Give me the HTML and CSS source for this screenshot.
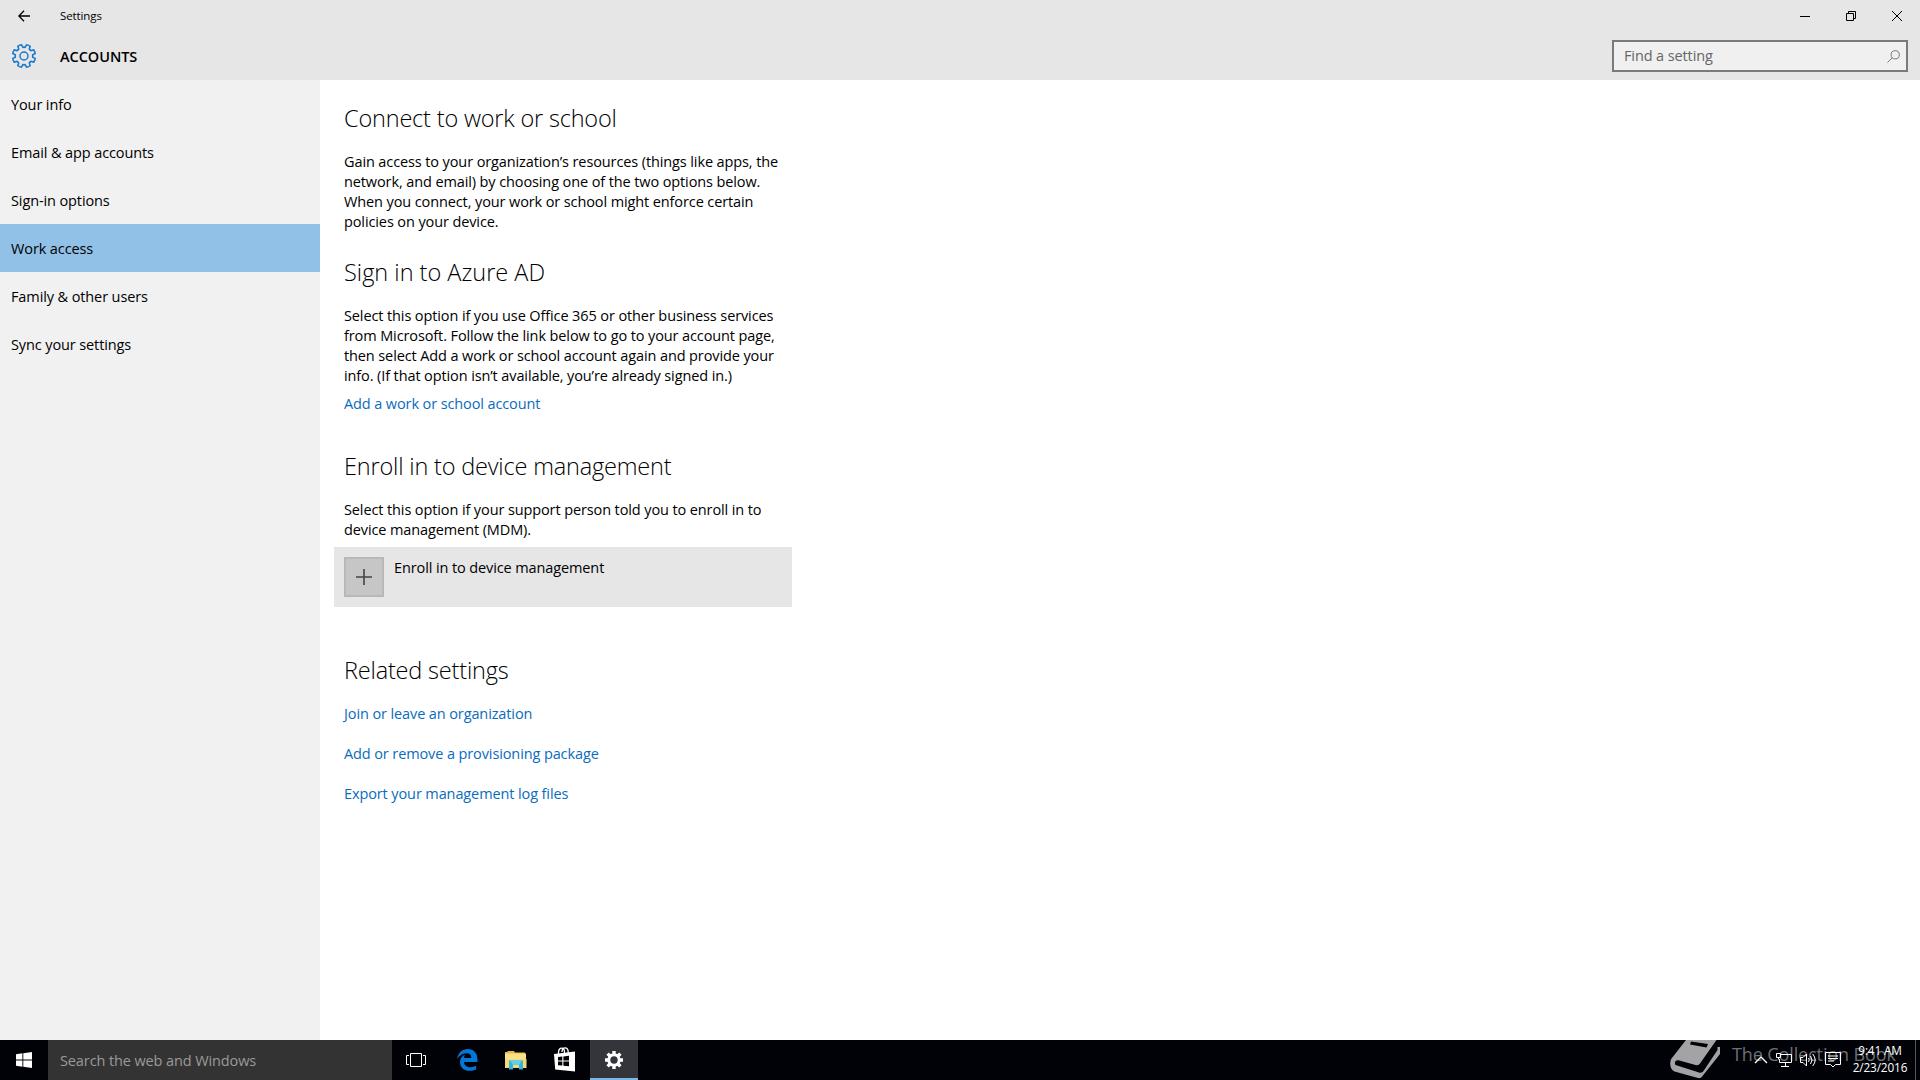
FILE: index.html
```html
<!DOCTYPE html>
<html lang="en">
<head>
    <meta charset="UTF-8">
    <meta name="viewport" content="width=device-width, initial-scale=1.0">
    <title>Settings</title>
    <link rel="stylesheet" href="styles.css">
</head>
<body>
    <div class="window">
        <div class="titlebar">
            <button class="back">
                <svg width="12" height="12" viewBox="0 0 12 12"><path d="M12 6H1M6 .8L.8 6L6 11.2"/></svg>
            </button>
            <span class="title">Settings</span>
            <div class="controls">
                <button><svg width="10" height="10" viewBox="0 0 10 10"><path d="M0 5.5H10"/></svg></button>
                <button><svg width="10" height="10" viewBox="0 0 10 10"><path d="M.5 2.5H7.5V9.5H.5ZM2.5 2.5V.5H9.5V7.5H7.5"/></svg></button>
                <button><svg width="10" height="10" viewBox="0 0 10 10"><path d="M0 0L10 10M10 0L0 10"/></svg></button>
            </div>
        </div>
        <div class="header">
            <svg class="gear" width="26" height="26" viewBox="-13 -13 26 26">
                <defs><path id="tooth" d="M0 -8.7L1.2 -8.6L2.4 -11.25Q4.5 -10.9 6.26 -9.64L5.24 -6.95L6.15 -6.15"/></defs>
                <use href="#tooth"/>
                <use href="#tooth" transform="rotate(45)"/>
                <use href="#tooth" transform="rotate(90)"/>
                <use href="#tooth" transform="rotate(135)"/>
                <use href="#tooth" transform="rotate(180)"/>
                <use href="#tooth" transform="rotate(225)"/>
                <use href="#tooth" transform="rotate(270)"/>
                <use href="#tooth" transform="rotate(315)"/>
                <circle r="4"/>
            </svg>
            <h1>ACCOUNTS</h1>
            <div class="find">
                <span>Find a setting</span>
                <svg width="13" height="13" viewBox="0 0 13 13"><circle cx="8.2" cy="4.8" r="4.1"/><path d="M5.2 7.8L.5 12.5"/></svg>
            </div>
        </div>
        <div class="content">
            <ul class="nav">
                <li>Your info</li>
                <li>Email &amp; app accounts</li>
                <li>Sign-in options</li>
                <li class="active">Work access</li>
                <li>Family &amp; other users</li>
                <li>Sync your settings</li>
            </ul>
            <div class="main">
                <h2 class="h-connect">Connect to work or school</h2>
                <p>Gain access to your organization’s resources (things like apps, the<br>
                network, and email) by choosing one of the two options below.<br>
                When you connect, your work or school might enforce certain<br>
                policies on your device.</p>

                <h2 class="h-azure">Sign in to Azure AD</h2>
                <p>Select this option if you use Office 365 or other business services<br>
                from Microsoft. Follow the link below to go to your account page,<br>
                then select Add a work or school account again and provide your<br>
                info. (If that option isn’t available, you’re already signed in.)</p>
                <a class="add-account">Add a work or school account</a>

                <h2 class="h-enroll">Enroll in to device management</h2>
                <p>Select this option if your support person told you to enroll in to<br>
                device management (MDM).</p>
                <div class="enroll">
                    <div class="plus"><svg width="16" height="16" viewBox="0 0 16 16"><path d="M8 0V16M0 8H16"/></svg></div>
                    <span>Enroll in to device management</span>
                </div>

                <h2 class="h-related">Related settings</h2>
                <div class="links">
                    <a>Join or leave an organization</a>
                    <a>Add or remove a provisioning package</a>
                    <a>Export your management log files</a>
                </div>
            </div>
        </div>
    </div>

    <div class="taskbar">
        <div class="task start">
            <svg width="16" height="16" viewBox="0 0 16 16"><path fill="#fff" d="M0 2.2L6.4 1.3V7.5H0ZM7.3 1.2L16 0V7.5H7.3ZM0 8.4H6.4V14.7L0 13.8ZM7.3 8.4H16V16L7.3 14.8Z"/></svg>
        </div>
        <div class="search">Search the web and Windows</div>
        <div class="task">
            <svg width="20" height="14" viewBox="0 0 20 14"><path fill="none" stroke="#fff" d="M4.5 .5H15.5V13.5H4.5ZM3 2.5H.5V11.5H3M17 2.5H19.5V11.5H17"/></svg>
        </div>
        <div class="apps">
            <div class="task">
                <svg width="21" height="22" viewBox="0 0 21 22"><path fill="#0078d7" d="M0 10C1 4 5 0 10.8 0C17 0 20.5 4.5 20.5 10.5V13H7C7.2 17 11 18.4 14 18.2C16 18.1 17.8 17.5 19.2 16.7V20.3C17.5 21.3 15 21.8 12.5 21.8C7 21.8 3 18.5 3 13C3 9.5 5 7 8 5.8C7.5 6.8 7.1 7.8 7 9H14.3C14.3 6 12.8 4.3 9.8 4.3C6 4.3 2.3 6.3 0 10Z"/></svg>
            </div>
            <div class="task">
                <svg width="22" height="19" viewBox="0 0 22 19">
                    <path fill="#e9b93c" d="M0 1H2L3 0H9L10 1.5H20V3H0Z"/>
                    <path fill="#fbe08a" d="M0 2.5H21V17H0Z"/>
                    <path fill="#f6d878" d="M0 17V8H21.5V17Z"/>
                    <path fill="#2fb4dd" d="M4 18.5V9.5H18V18.5H14V14H8V18.5Z"/>
                    <path fill="#5cd0ee" d="M5 9.5H17L14 14H8Z"/>
                </svg>
            </div>
            <div class="task">
                <svg class="store" width="22" height="25" viewBox="0 0 22 25">
                    <path fill="none" stroke="#fff" stroke-width="1.3" d="M4.5 7V5.5C4.5 2.5 6 1.2 7.6 1.2C9.3 1.2 10.5 2.5 10.5 5.5V6M8 5C8 2 9.5 .8 11 .8C13 .8 14.2 2.2 14.2 5V6"/>
                    <path fill="#fff" d="M0 7L21 4.5V24.5L1.2 22.5Z"/>
                    <path fill="#000208" d="M4 10L8.3 9.5V13.4H4ZM9.4 9.4L15 8.7V13.4H9.4ZM4 14.4H8.3V18.6L4 18.2ZM9.4 14.4H15V19.3L9.4 18.7Z"/>
                </svg>
            </div>
            <div class="task current">
                <svg width="20" height="20" viewBox="-10 -10 20 20">
                    <circle r="5.2" fill="none" stroke="#fff" stroke-width="3"/>
                    <path stroke="#fff" stroke-width="3.4" d="M0 -9V-5M0 9V5M-9 0H-5M9 0H5M-6.4 -6.4L-4 -4M6.4 6.4L4 4M-6.4 6.4L-4 4M6.4 -6.4L4 -4"/>
                </svg>
            </div>
        </div>
        <div class="watermark">
            <svg width="52" height="40" viewBox="0 0 52 40">
                <path fill="#a3a3a5" fill-rule="evenodd" d="M16 0H46.5L30 23.5C29 25 27.5 25.5 25.5 25L8.5 20.3C5.5 19.6 4 22.5 5.5 25L29 32.5C31 33 32.5 32.5 33.5 31L47.5 10V7H50V14L32.5 36C31.3 37.8 30 38.5 28 38L4.5 31.5C1 30 -.5 25.5 .5 21C1 19 2 17.5 3.5 16ZM21 1.5L20 4.5L36.5 7.5L38 4Z"/>
            </svg>
            <span>The Collection Book</span>
        </div>
        <div class="tray">
            <svg width="14" height="8" viewBox="0 0 14 8"><path stroke-width="1.4" d="M1 7L7 1L13 7"/></svg>
            <svg width="16" height="14" viewBox="0 0 16 14"><path d="M5 1.5H15.5V9.5H3.5V6M.5 .5H4.5V4.5H.5ZM2.5 4.5V6.5M9.5 9.5V13M5 13.5H13"/></svg>
            <svg width="17" height="14" viewBox="0 0 17 14"><path d="M.5 4.5H3L6.5 1V13L3 9.5H.5ZM8.5 5Q10 7 8.5 9M10.5 3Q13.5 7 10.5 11M12.7 1Q17.7 7 12.7 13"/></svg>
            <svg width="16" height="16" viewBox="0 0 16 16"><path d="M.5 .5H15.5V12.5H10.5L8 15L5.5 12.5H.5ZM3 4H13M3 6.5H13M3 9H9"/></svg>
            <div class="clock"><span>9:41 AM</span><span class="date">2/23/2016</span></div>
            <div class="desktop"></div>
        </div>
    </div>
</body>
</html>
```
FILE: styles.css
```css
*{box-sizing: border-box;}
body{
    margin: 0;
    width: 1920px;
    height: 1080px;
    overflow: hidden;
    background: #fff;
    color: #000;
    font-family: "Open Sans", "Noto Sans", sans-serif;
    font-size: 14.5px;
    line-height: 20px;
    letter-spacing: -0.11px;
    white-space: nowrap;
}
button{
    padding: 0;
    border: 0;
    background: none;
}
svg{
    display: block;
    flex: none;
}
.window{
    height: 1040px;
}
.titlebar{
    display: flex;
    align-items: center;
    height: 32px;
    background: #e6e6e6;
}
.titlebar svg{
    margin: 0 auto;
    fill: none;
    stroke: #000;
}
.back{
    width: 48px;
}
.back svg{
    stroke-width: 1.3;
}
.title{
    margin-left: 12px;
    font-size: 11.5px;
    letter-spacing: -0.1px;
}
.controls{
    display: flex;
    margin-left: auto;
}
.controls button{
    width: 46px;
}
.header{
    display: flex;
    align-items: center;
    height: 48px;
    padding: 0 12px 0 11px;
    background: #e6e6e6;
}
.gear{
    fill: none;
    stroke: #1b7ac9;
    stroke-width: 1.5;
    stroke-linejoin: round;
    stroke-linecap: round;
}
.header h1{
    margin: 0 0 0 23px;
    padding-top: 2px;
    font-size: 14.5px;
    font-weight: 600;
    letter-spacing: -0.05px;
}
.find{
    display: flex;
    align-items: center;
    justify-content: space-between;
    width: 296px;
    height: 32px;
    margin-left: auto;
    padding: 0 6px 0 10px;
    border: 2px solid #7a7a7a;
    background: #f0f0f0;
    color: #666;
}
.find svg{
    fill: none;
    stroke: #7a7a7a;
}
.content{
    display: flex;
    height: 960px;
}
.nav{
    width: 320px;
    margin: 0;
    padding: 0;
    background: #f1f1f1;
    list-style: none;
}
.nav li{
    height: 48px;
    padding-left: 11px;
    line-height: 50px;
}
.nav .active{
    background: #91c1e7;
}
.main{
    padding: 22px 0 0 24px;
}
.main h2{
    margin: 0 0 18px;
    font-size: 23.5px;
    font-weight: 300;
    line-height: 32px;
    letter-spacing: -0.18px;
}
.main p{
    margin: 0;
}
.main a{
    display: block;
    color: #0a6cbd;
}
.main .h-azure{
    margin-top: 24px;
    letter-spacing: 0;
}
.main .add-account{
    margin-top: 8px;
}
.main .h-enroll{
    margin-top: 36px;
}
.enroll{
    display: flex;
    width: 458px;
    height: 60px;
    margin: 7px 0 0 -10px;
    padding: 10px;
    background: #e6e6e6;
}
.enroll span{
    margin-left: 10px;
    padding-top: 1px;
}
.plus{
    display: flex;
    align-items: center;
    justify-content: center;
    width: 40px;
    height: 40px;
    border: 2px solid #b8b8b8;
    background: #c6c6c6;
}
.plus path{
    stroke: #444;
    stroke-width: 1.6;
}
.main .h-related{
    margin-top: 47px;
}
.links{
    display: flex;
    flex-direction: column;
    gap: 20px;
}

.taskbar{
    display: flex;
    position: relative;
    height: 40px;
    background: #000208;
    color: #fff;
}
.task{
    display: flex;
    align-items: center;
    justify-content: center;
    width: 48px;
    height: 40px;
}
.search{
    width: 344px;
    padding-left: 12px;
    background: #333;
    color: #9a9a9a;
    line-height: 42px;
}
.apps{
    display: flex;
    gap: 1px;
    margin-left: 3px;
}
.store{
    margin-bottom: 2px;
}
.current{
    background: #33353a;
    box-shadow: inset 0 -2px #76b9ed;
}
/* sits behind the tray icons */
.watermark{
    display: flex;
    position: absolute;
    top: 0;
    left: 1670px;
    color: #6f7073;
    font-size: 18px;
    line-height: 28px;
}
.watermark span{
    margin-left: 10px;
}
.tray{
    display: flex;
    position: relative;
    align-items: center;
    gap: 8px;
    margin-left: auto;
}
.tray svg{
    fill: none;
    stroke: #fff;
}
.clock{
    display: flex;
    flex-direction: column;
    align-items: center;
    width: 54px;
    margin-left: 4px;
    padding-bottom: 2px;
    font-size: 11.8px;
    line-height: 17px;
    letter-spacing: -0.15px;
}
.desktop{
    width: 5px;
    height: 40px;
    border-left: 1px solid #55565a;
}
```
